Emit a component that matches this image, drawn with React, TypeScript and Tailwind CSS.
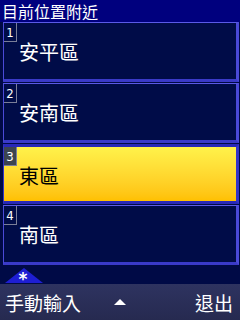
import React from "react";

const items = [
  { n: "1", name: "安平區", sel: false },
  { n: "2", name: "安南區", sel: false },
  { n: "3", name: "東區", sel: true },
  { n: "4", name: "南區", sel: false },
];

const cjk = { fontFamily: '"Noto Sans CJK TC", "Noto Sans", sans-serif' };

export default function App() {
  return (
    <div className="w-[240px] h-[320px] overflow-hidden flex flex-col bg-[#000a46]" style={cjk}>
      <div className="h-[22px] bg-[#00007e] flex items-center pl-[2px] text-white text-[16px] leading-none shrink-0">
        目前位置附近
      </div>
      <div className="flex flex-col pl-[3px] pr-[1px]">
        {items.map((it) => (
          <div
            key={it.n}
            className={
              "h-[60px] mb-[1px] flex flex-col border-l border-r-[3px] border-b-[3px] " +
              (it.sel
                ? "border-t-[3px] border-t-[#2828b8] border-l-[#3434c8] border-r-[#3434c8] border-b-[#2828b8] bg-gradient-to-b from-[#fff24a] to-[#ffc000]"
                : "border-t border-t-[#5a5ae6] border-l-[#4a4ad8] border-r-[#4a4ad8] border-b-[#3a3ac8] bg-[#000c48]")
            }
          >
            <div
              className={
                "w-[13px] h-[19px] flex items-center justify-center text-white text-[13px] leading-none border-r border-b border-[#7a7e98] " +
                (it.sel ? "bg-[#3c4450]" : "")
              }
              style={{ fontFamily: '"DejaVu Sans Condensed", "Liberation Sans", sans-serif' }}
            >
              {it.n}
            </div>
            <div
              className={
                "ml-[15px] text-[20px] leading-none " + (it.sel ? "text-black" : "text-white")
              }
            >
              {it.name}
            </div>
          </div>
        ))}
      </div>
      <div className="flex-1 relative">
        <div className="absolute left-[5px] top-[2px] w-0 h-0 border-l-[19px] border-r-[19px] border-b-[15px] border-l-transparent border-r-transparent border-b-[#1e1ed2]" />
        <div className="absolute left-[16px] top-[5px] w-[14px] text-center text-white text-[17px] leading-none font-bold" style={{ fontFamily: '"DejaVu Sans", sans-serif' }}>
          *
        </div>
      </div>
      <div className="h-[36px] shrink-0 bg-gradient-to-b from-[#2e3360] to-[#262a50] grid grid-cols-[1fr_auto_1fr] items-center px-[5px] text-white text-[19px] leading-none">
        <span>手動輸入</span>
        <span className="w-0 h-0 border-l-[6px] border-r-[6px] border-b-[6px] border-l-transparent border-r-transparent border-b-white" />
        <span className="justify-self-end mr-[2px]">退出</span>
      </div>
    </div>
  );
}
